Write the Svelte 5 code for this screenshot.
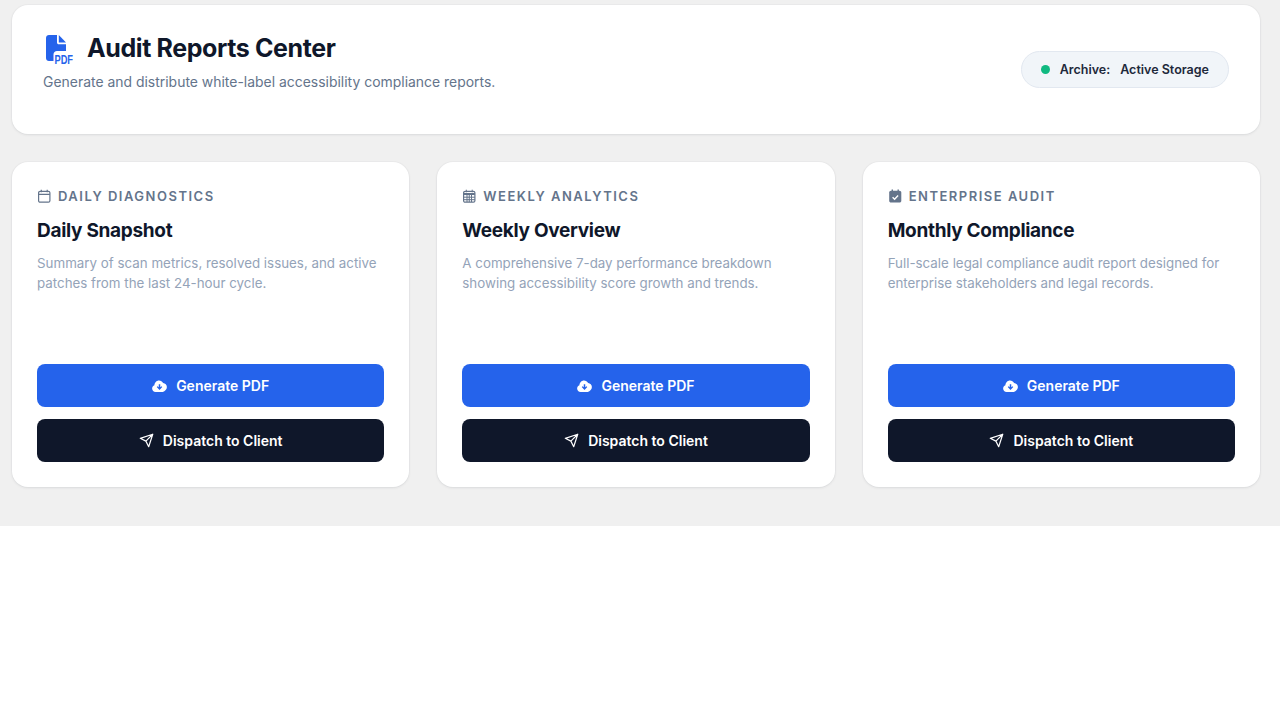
<script>
  const reports = [
    {
      icon: 'day',
      tag: 'Daily Diagnostics',
      title: 'Daily Snapshot',
      text: 'Summary of scan metrics, resolved issues, and active patches from the last 24-hour cycle.'
    },
    {
      icon: 'week',
      tag: 'Weekly Analytics',
      title: 'Weekly Overview',
      text: 'A comprehensive 7-day performance breakdown showing accessibility score growth and trends.'
    },
    {
      icon: 'check',
      tag: 'Enterprise Audit',
      title: 'Monthly Compliance',
      text: 'Full-scale legal compliance audit report designed for enterprise stakeholders and legal records.'
    }
  ];
</script>

<div class="page">
  <header class="hero">
    <div class="hero-text">
      <h1>
        <svg class="pdf-icon" viewBox="0 -6 36 40" width="36" height="40" aria-hidden="true">
          <path d="M3 0h8v7.500c0 1 .8 1.800 1.800 1.800H20V16H11c-2 0-3.500 1.500-3.500 3.500V26H3c-1.700 0-3-1.300-3-3V3c0-1.700 1.300-3 3-3z" fill="#2563eb" />
          <path d="M12.800 0L20 7.500h-7.200z" fill="#2563eb" />
          <text x="8.500" y="28.500" class="pdf-label" textLength="18.500" lengthAdjust="spacingAndGlyphs">PDF</text>
        </svg>
        Audit Reports Center
      </h1>
      <p>Generate and distribute white-label accessibility compliance reports.</p>
    </div>
    <div class="status">
      <span class="dot"></span>
      <span>Archive:</span>
      <span>Active Storage</span>
    </div>
  </header>

  <section class="grid">
    {#each reports as r}
      <article class="card">
        <div class="tag">
          <svg viewBox="0 0 14 14" width="14" height="14" aria-hidden="true">
            {#if r.icon === 'day'}
              <rect x="1.600" y="2.300" width="11.300" height="10.900" rx="1.500" fill="none" stroke="#64748b" stroke-width="1.200" />
              <path d="M1.600 5.400h11.300M4.300 .7v2.600M10.200 .7v2.600" stroke="#64748b" stroke-width="1.200" fill="none" />
            {:else if r.icon === 'week'}
              <rect x="1.600" y="2.300" width="11.300" height="10.900" rx="1.500" fill="none" stroke="#64748b" stroke-width="1.200" />
              <path d="M1.600 4h11.300v2H1.600z" fill="#64748b" />
              <path d="M1.600 8.200h11.300M1.600 10.700h11.300M5 5.500v7.500M7.250 5.500v7.500M9.500 5.500v7.500M4.300 .7v2.600M10.200 .7v2.600" stroke="#64748b" stroke-width="1" fill="none" />
            {:else}
              <path d="M3 1.800h8.500c1 0 1.800.8 1.800 1.800v8.200c0 1-.8 1.800-1.800 1.800H3c-1 0-1.800-.8-1.800-1.800V3.600c0-1 .8-1.800 1.800-1.800z" fill="#64748b" />
              <path d="M4.300 .5v3M10.200 .5v3" stroke="#64748b" stroke-width="1.400" fill="none" />
              <path d="M4.600 8.200l2 2 3.500-3.700" stroke="#fff" stroke-width="1.400" fill="none" />
            {/if}
          </svg>
          {r.tag}
        </div>
        <h2>{r.title}</h2>
        <p>{r.text}</p>
        <div class="actions">
          <button class="primary">
            <svg viewBox="0 0 16 13" width="15" height="12" aria-hidden="true">
              <path fill-rule="evenodd" fill="#fff" d="M3.700 13C1.700 13 0 11.400 0 9.300c0-1.600 1-3 2.500-3.500C2.500 3 4.700.6 7.500.6c1.900 0 3.500 1 4.400 2.600 2.300.2 4.100 2.100 4.100 4.400 0 2.500-2 4.500-4.500 5.400H3.700zM7.200 4.600v3.300L6 6.700l-1 1 3 3 3-3-1-1-1.200 1.200V4.600z" />
            </svg>
            Generate PDF
          </button>
          <button class="dark">
            <svg viewBox="0 0 24 24" width="15" height="15" aria-hidden="true">
              <path d="M22 2L15.500 22 11 13 2 8.500zM22 2L11 13" fill="none" stroke="#fff" stroke-width="1.900" stroke-linejoin="round" stroke-linecap="round" />
            </svg>
            Dispatch to Client
          </button>
        </div>
      </article>
    {/each}
  </section>
</div>

<style>
  :global(body) {
    background: #fff;
    font-family: Inter, "Liberation Sans", sans-serif;
  }

  .page {
    background: #f0f0f0;
    padding: 5px 20px 39px 12px;
  }

  .hero {
    display: flex;
    justify-content: space-between;
    align-items: center;
    background: #fff;
    border-radius: 16px;
    padding: 25px 31px 42px 31px;
    margin-bottom: 28px;
    box-shadow: 0 1px 3px rgba(15, 23, 42, 0.08), 0 0 0 1px rgba(15, 23, 42, 0.02);
  }

  h1 {
    display: flex;
    align-items: center;
    gap: 13px;
    margin: 0 0 6px;
    padding-left: 3px;
    font-size: 25px;
    line-height: 36px;
    font-weight: 700;
    letter-spacing: -0.4px;
    color: #0f172a;
  }

  .pdf-icon {
    margin: -1px -8px -3px 0;
  }

  .pdf-label {
    font-family: "Liberation Sans", sans-serif;
    font-size: 12px;
    font-weight: 700;
    letter-spacing: 0;
    fill: #2563eb;
  }

  .hero-text p {
    margin: 0;
    font-size: 13.950px;
    line-height: 20px;
    color: #64748b;
  }

  .status {
    display: flex;
    align-items: center;
    gap: 10px;
    height: 37px;
    box-sizing: border-box;
    padding: 0 19px;
    margin-top: 16px;
    background: #f1f5f9;
    border: 1px solid #e2e8f0;
    border-radius: 999px;
    font-size: 12.500px;
    font-weight: 600;
    color: #1e293b;
  }

  .dot {
    width: 9px;
    height: 9px;
    border-radius: 50%;
    background: #10b981;
  }

  .grid {
    display: grid;
    grid-template-columns: repeat(3, 1fr);
    gap: 28px;
  }

  .card {
    display: flex;
    flex-direction: column;
    height: 325px;
    box-sizing: border-box;
    background: #fff;
    border-radius: 16px;
    padding: 24px 25px 25px;
    box-shadow: 0 1px 3px rgba(15, 23, 42, 0.08), 0 0 0 1px rgba(15, 23, 42, 0.02);
  }

  .tag {
    display: flex;
    align-items: center;
    gap: 7px;
    font-size: 13px;
    line-height: 20px;
    font-weight: 600;
    letter-spacing: 1.500px;
    text-transform: uppercase;
    color: #64748b;
  }

  h2 {
    margin: 12px 0 9px;
    font-size: 19px;
    line-height: 26px;
    font-weight: 700;
    letter-spacing: -0.3px;
    color: #0f172a;
  }

  .card p {
    margin: 0;
    font-size: 13.350px;
    line-height: 20px;
    color: #94a3b8;
  }

  .actions {
    display: flex;
    flex-direction: column;
    gap: 12px;
    margin-top: auto;
  }

  button {
    display: flex;
    align-items: center;
    justify-content: center;
    gap: 9px;
    height: 43px;
    border: none;
    border-radius: 8px;
    font-family: inherit;
    font-size: 14px;
    font-weight: 600;
    color: #fff;
    cursor: pointer;
  }

  .primary {
    background: #2563eb;
  }

  .dark {
    background: #0f172a;
  }
</style>
